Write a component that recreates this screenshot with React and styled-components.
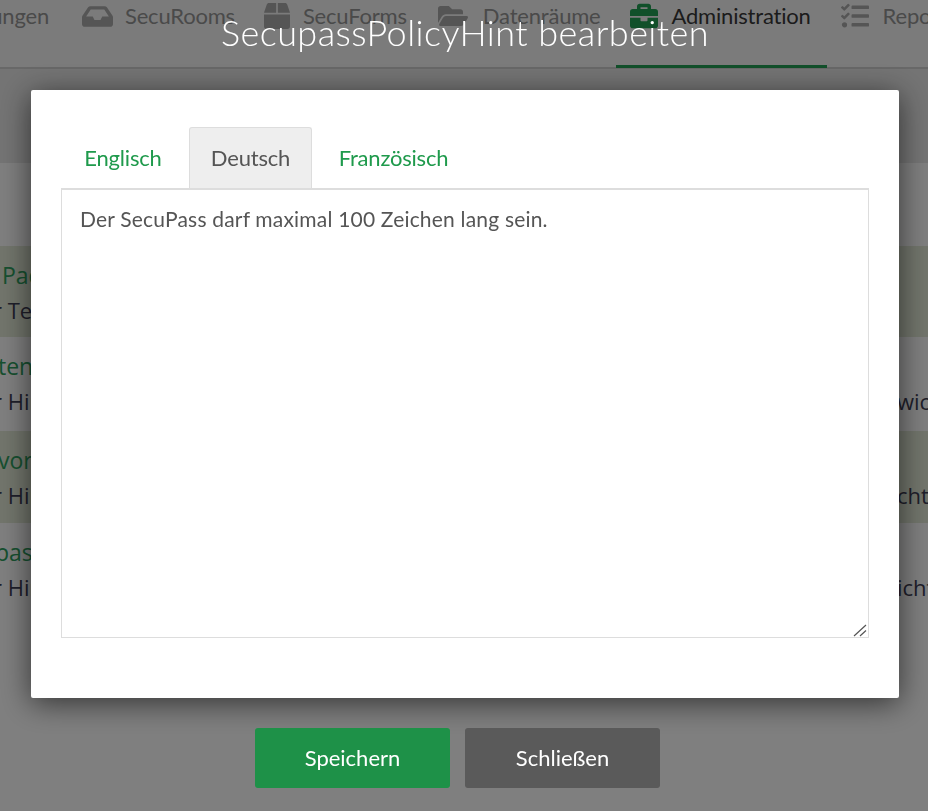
import React from "react";
import styled, { createGlobalStyle } from "styled-components";
import { FaInbox, FaBox, FaFolderOpen, FaBriefcase, FaTasks } from "react-icons/fa";

const GlobalStyle = createGlobalStyle`
  html, body {
    margin: 0;
    height: 100%;
    overflow: hidden;
    background: #fff;
    font-family: Lato, "Liberation Sans", sans-serif;
  }
  * { box-sizing: border-box; }
`;

const navItems = [
  { icon: FaInbox, size: 31, cell: 36, label: "SecuRooms" },
  { icon: FaBox, size: 26, cell: 32, label: "SecuForms" },
  { icon: FaFolderOpen, size: 30, cell: 40, label: "Datenräume" },
  { icon: FaBriefcase, size: 28, cell: 35, label: "Administration", active: true },
  { icon: FaTasks, size: 28, cell: 36, label: "Reports" },
];

const rows = [
  { title: "Pac", text: "r Te", end: "", tint: true, height: 91, x: 2 },
  { title: "ten", text: "r Hin", end: "wichtig", height: 94, x: -2 },
  { title: "vor", text: "r Hin", end: "cht", tint: true, height: 92, x: -2 },
  { title: "pas", text: "r Hin", end: "icht", height: 92, x: -5 },
];

const tabs = [
  { label: "Englisch", width: 124 },
  { label: "Deutsch", width: 123, active: true },
  { label: "Französisch", width: 155 },
];

const App = () => {
  return (
    <>
      <GlobalStyle />
      <Page>
        <Nav>
          <NavLead>ungen</NavLead>
          {navItems.map((item) => (
            <NavItem key={item.label} $active={item.active}>
              <IconCell $width={item.cell} $active={item.active}>
                <item.icon size={item.size} />
              </IconCell>
              <span>{item.label}</span>
            </NavItem>
          ))}
        </Nav>
        <SubHeader />
        <List>
          {rows.map((row) => (
            <Row key={row.title} $tint={row.tint} $height={row.height}>
              <RowTitle $x={row.x}>{row.title}</RowTitle>
              <RowLine>
                <span>{row.text}</span>
                <span>{row.end}</span>
              </RowLine>
            </Row>
          ))}
        </List>
      </Page>

      <Overlay>
        <Title>SecupassPolicyHint bearbeiten</Title>
        <Dialog>
          <Tabs>
            {tabs.map((tab) => (
              <Tab key={tab.label} $active={tab.active} $width={tab.width}>
                {tab.label}
              </Tab>
            ))}
          </Tabs>
          <EditorWrap>
            <Editor defaultValue="Der SecuPass darf maximal 100 Zeichen lang sein." />
            <ResizeGrip width="14" height="14" viewBox="0 0 14 14">
              <path d="M1 13 L13 2 M7 13 L13 7.5" stroke="#555" strokeWidth="1.2" fill="none" />
            </ResizeGrip>
          </EditorWrap>
        </Dialog>
        <Buttons>
          <Button $bg="#1e9148">Speichern</Button>
          <Button $bg="#5a5a5a">Schließen</Button>
        </Buttons>
      </Overlay>
    </>
  );
};

export default App;

const Page = styled.div`
  width: 928px;
  height: 811px;
  overflow: hidden;
  background: #fff;
`;

const Nav = styled.nav`
  display: flex;
  height: 69px;
  background: #f7f7f7;
  border-bottom: 2px solid #d0d0d0;
  white-space: nowrap;
  letter-spacing: -0.2px;
`;

const NavLead = styled.div`
  display: flex;
  justify-content: flex-end;
  flex: none;
  width: 68px;
  padding: 1px 19px 0 0;
  font-size: 22px;
  line-height: 30px;
  color: #949494;
`;

const NavItem = styled.div`
  display: flex;
  flex: none;
  gap: 10px;
  height: 68px;
  padding: 1px 16px 0 11px;
  font-size: 22px;
  line-height: 30px;
  color: ${(p) => (p.$active ? "#383838" : "#949494")};
  border-bottom: ${(p) => (p.$active ? "3px solid #23a055" : "none")};
  margin-right: -1px;
`;

const IconCell = styled.div`
  display: flex;
  justify-content: center;
  align-items: center;
  width: ${(p) => p.$width}px;
  height: 30px;
  color: ${(p) => (p.$active ? "#23a055" : "#ababab")};
`;

const SubHeader = styled.div`
  height: 94px;
  background: #e9e9e9;
`;

const List = styled.div`
  padding-top: 83px;
`;

const Row = styled.div`
  height: ${(p) => p.$height}px;
  padding-top: 13px;
  background: ${(p) => (p.$tint ? "#e4ebd8" : "#fff")};
`;

const RowTitle = styled.div`
  padding-left: ${(p) => Math.max(p.$x, 0)}px;
  margin-left: ${(p) => Math.min(p.$x, 0)}px;
  font-family: "Open Sans", sans-serif;
  font-size: 23px;
  line-height: 32px;
  color: #2ea060;
`;

const RowLine = styled.div`
  display: grid;
  grid-template-columns: 904px 1fr;
  margin: 4px 0 0 -7px;
  font-family: "Open Sans", sans-serif;
  font-size: 22px;
  line-height: 30px;
  color: #3e3e55;
  white-space: nowrap;
`;

const Overlay = styled.div`
  position: fixed;
  inset: 0;
  padding-left: 2px;
  display: flex;
  flex-direction: column;
  align-items: center;
  background: rgba(0, 0, 0, 0.5);
`;

const Title = styled.h1`
  height: 90px;
  margin: 0;
  padding-top: 8px;
  font-size: 36px;
  font-weight: 300;
  letter-spacing: 0.45px;
  line-height: 48px;
  color: #fff;
`;

const Dialog = styled.div`
  width: 868px;
  height: 608px;
  padding: 37px 30px 60px;
  display: flex;
  flex-direction: column;
  background: #fff;
  border-radius: 2px;
  box-shadow: 0 5px 30px rgba(0, 0, 0, 0.6);
`;

const Tabs = styled.div`
  display: flex;
  gap: 4px;
  height: 61px;
  flex: none;
`;

const Tab = styled.div`
  width: ${(p) => p.$width}px;
  height: 61px;
  padding-top: 16px;
  text-align: center;
  font-size: 22px;
  letter-spacing: -0.2px;
  line-height: 28px;
  color: ${(p) => (p.$active ? "#555" : "#1f9a4c")};
  background: ${(p) => (p.$active ? "#eee" : "transparent")};
  border: 1px solid ${(p) => (p.$active ? "#ddd" : "transparent")};
  border-bottom: none;
  border-radius: 3px 3px 0 0;
`;

const EditorWrap = styled.div`
  position: relative;
  display: flex;
  flex: 1;
`;

const Editor = styled.textarea`
  display: block;
  flex: 1;
  padding: 15px 18px;
  font-family: inherit;
  font-size: 21px;
  letter-spacing: 0.19px;
  line-height: 28px;
  color: #555;
  background: #fff;
  border: 1px solid #ddd;
  border-top-width: 2px;
  outline: none;
  resize: none;
`;

const ResizeGrip = styled.svg`
  position: absolute;
  right: 2px;
  bottom: 1px;
`;

const Buttons = styled.div`
  display: flex;
  margin-top: 30px;
`;

const Button = styled.button`
  width: 195px;
  height: 60px;
  margin-right: 15px;
  padding: 0 0 2px;
  font-family: inherit;
  font-size: 22px;
  color: #fff;
  background: ${(p) => p.$bg};
  border: none;
  border-radius: 3px;
`;
